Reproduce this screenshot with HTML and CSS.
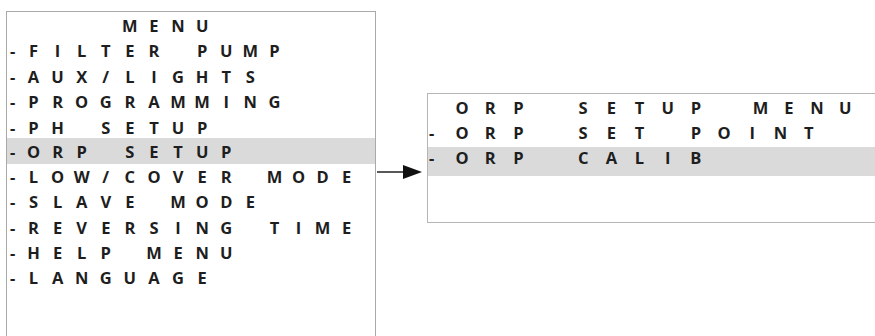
FILE: index.html
```html
<!DOCTYPE html>
<html lang="en"><head>
    <meta charset="utf-8">
    <meta name="viewport" content="width=device-width, initial-scale=1.0">
    <title>ORP setup menu</title>
    <link rel="stylesheet" href="styles.css">
</head>
<body>
    <div id="diagram">
        <ul class="screen" id="main-menu">
            <li class="title">&nbsp;    MENU</li>
            <li>-FILTER PUMP</li>
            <li>-AUX/LIGHTS</li>
            <li>-PROGRAMMING</li>
            <li>-PH SETUP</li>
            <li class="selected">-ORP SETUP</li>
            <li>-LOW/COVER MODE</li>
            <li>-SLAVE MODE</li>
            <li>-REVERSING TIME</li>
            <li>-HELP MENU</li>
            <li>-LANGUAGE</li>
        </ul>

        <div id="link">
            <svg width="48" height="16" viewBox="0 0 48 16">
                <line x1="0" y1="8" x2="29" y2="8" stroke="#111" stroke-width="1.4"/>
                <polygon points="26,1 45,8 26,15" fill="#111"/>
            </svg>
        </div>

        <ul class="screen" id="orp-menu">
            <li class="title">&nbsp;ORP SETUP MENU</li>
            <li>-ORP SET&nbsp;POINT</li>
            <li class="selected">-ORP CALIB</li>
        </ul>
    </div>

    <script type="text/javascript">
        // split every menu line into fixed character cells, like the display does
        document.querySelectorAll('.screen li').forEach(function (li) {
            const text = li.textContent;
            li.textContent = '';
            for (let i = 0; i < text.length; i++) {
                const cell = document.createElement('span');
                cell.className = 'cell';
                if (i === 0) {
                    cell.classList.add('lead');
                } else if (text[i] === ' ') {
                    cell.classList.add('space');
                }
                cell.textContent = text[i];
                li.appendChild(cell);
            }
        });
    </script>
</body></html>
```

FILE: styles.css
```css
body {
    margin: 0;
    padding: 0;
    background-color: #fff;
    font-family: "Open Sans", Lato, "Liberation Sans", sans-serif;
    color: #1e1e1e;
    overflow: hidden;
}

#diagram {
    display: flex;
    align-items: flex-start;
    padding: 11px 0 0 6px;
    width: 875px;
    height: 336px;
    box-sizing: border-box;
}

.screen {
    list-style: none;
    margin: 0;
    padding: 0;
    box-sizing: border-box;
    flex-shrink: 0;
}

.screen li {
    white-space: pre;
    font-weight: 700;
    font-size: 16.5px;
}

.cell {
    display: inline-block;
    text-align: center;
    box-sizing: border-box;
}

.cell.lead {
    text-align: left;
}

.selected {
    background-color: #dadada;
}

#main-menu {
    width: 370px;
    height: 340px;
    padding-top: 1px;
    border: 1px solid #a9a9a9;
    border-bottom: none;
}

#main-menu li {
    line-height: 25.44px;
}

#main-menu .cell {
    width: 24.1px;
}

#main-menu .cell.lead {
    width: 14.45px;
    padding-left: 3px;
}

#main-menu li.selected {
    margin-top: -2px;
    padding-top: 2px;
    line-height: 23.44px;
}

#link {
    margin: 153px 0 0 1px;
    width: 50px;
    height: 16px;
    flex-shrink: 0;
}

#link svg {
    display: block;
}

#orp-menu {
    margin-top: 82px;
    width: 449px;
    height: 130px;
    padding-top: 2px;
    border: 1px solid #b5b5b5;
    border-right: none;
}

#orp-menu li {
    line-height: 24.5px;
}

#orp-menu .cell {
    width: 28.2px;
}

#orp-menu .cell.space {
    width: 36.5px;
}

#orp-menu .cell.lead {
    width: 20px;
    padding-left: 1px;
}

#orp-menu li.selected {
    margin-top: 2px;
    line-height: 22.5px;
    padding-bottom: 6px;
}
```
